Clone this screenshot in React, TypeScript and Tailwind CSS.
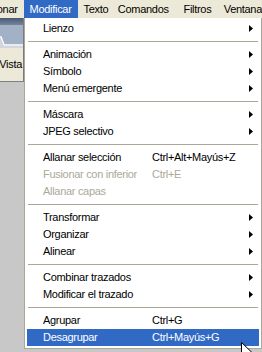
import React from "react";

type Item =
  | { sep: true }
  | { label: string; shortcut?: string; sub?: boolean; disabled?: boolean; active?: boolean };

const items: Item[] = [
  { label: "Lienzo", sub: true },
  { sep: true },
  { label: "Animación", sub: true },
  { label: "Símbolo", sub: true },
  { label: "Menú emergente", sub: true },
  { sep: true },
  { label: "Máscara", sub: true },
  { label: "JPEG selectivo", sub: true },
  { sep: true },
  { label: "Allanar selección", shortcut: "Ctrl+Alt+Mayús+Z" },
  { label: "Fusionar con inferior", shortcut: "Ctrl+E", disabled: true },
  { label: "Allanar capas", disabled: true },
  { sep: true },
  { label: "Transformar", sub: true },
  { label: "Organizar", sub: true },
  { label: "Alinear", sub: true },
  { sep: true },
  { label: "Combinar trazados", sub: true },
  { label: "Modificar el trazado", sub: true },
  { sep: true },
  { label: "Agrupar", shortcut: "Ctrl+G" },
  { label: "Desagrupar", shortcut: "Ctrl+Mayús+G", active: true },
];

function Arrow({ white }: { white?: boolean }) {
  return (
    <svg width="4" height="7" viewBox="0 0 4 7" className="block">
      <polygon points="0,0 4,3.5 0,7" fill={white ? "#fff" : "#000"} />
    </svg>
  );
}

export default function App() {
  return (
    <div className="relative w-[262px] h-[352px] overflow-hidden bg-[#c8c8c8] font-['Liberation_Sans',Arial,sans-serif] text-[11px] tracking-[-0.3px] text-black leading-none">
      {/* menubar */}
      <div className="flex h-[18px] bg-[#ECE9D8] whitespace-nowrap">
        <div className="w-[24px] h-full overflow-hidden flex items-center justify-end pr-[6px]">
          <span>Seleccionar</span>
        </div>
        <div className="w-[55px] h-full flex items-center pl-[6px] bg-[#316AC5] text-white">Modificar</div>
        <div className="w-[35px] h-full flex items-center pl-[6px]">Texto</div>
        <div className="w-[67px] h-full flex items-center pl-[6px]">Comandos</div>
        <div className="w-[41px] h-full flex items-center pl-[6px]">Filtros</div>
        <div className="flex-1 h-full flex items-center pl-[6px]">Ventana</div>
      </div>

      <div className="flex">
        {/* left panel */}
        <div className="w-[24px] shrink-0 flex flex-col">
          <div className="h-[7px] bg-gradient-to-b from-[#4a5a72] to-[#75869f] border-r border-[#7a7a7a]" />
          <div className="relative h-[23px] bg-[#a3b1c6] border-r border-[#7a7a7a]">
            <svg width="23" height="23" viewBox="0 0 23 23" className="absolute left-0 top-0">
              <polyline points="0,12 1,12 4,20 23,20" fill="none" stroke="#ffffff" strokeWidth="1.5" />
              <polygon points="0,13 0.5,13 3.5,21 23,21 23,23 0,23" fill="#d3d7dd" />
            </svg>
          </div>
          <div className="h-[33px] bg-[#ECE9D8] flex items-center justify-end overflow-hidden pr-[1px] border-r border-[#7a7a7a]">
            <span>Vista</span>
          </div>
          <div className="h-[1px] bg-[#808080]" />
        </div>

        {/* dropdown menu */}
        <div className="w-[238px] shrink-0 bg-white border-l border-r border-b border-[#ACA899] pt-[2px] pb-[2px] px-[2px]">
          {items.map((it, i) =>
            "sep" in it ? (
              <div key={i} className="h-[9px] flex items-center px-[1px]">
                <div className="h-px w-full bg-[#ACA899]" />
              </div>
            ) : (
              <div
                key={i}
                className={
                  "h-[17px] flex items-center pl-[16px] pr-[6px] whitespace-nowrap " +
                  (it.active ? "bg-[#316AC5] text-white " : "") +
                  (it.disabled ? "text-[#ACA899]" : "")
                }
              >
                <span className="w-[109px] shrink-0">{it.label}</span>
                {it.shortcut && <span>{it.shortcut}</span>}
                {it.sub && (
                  <span className="ml-auto">
                    <Arrow white={it.active} />
                  </span>
                )}
              </div>
            )
          )}
        </div>
      </div>

      {/* mouse cursor */}
      <svg
        width="13"
        height="20"
        viewBox="0 0 13 20"
        className="absolute left-[241px] top-[342px]"
      >
        <path
          d="M0.5,0.5 L0.5,16.5 L4.5,12.5 L7,18.5 L9.5,17.5 L7,11.5 L12,11.5 Z"
          fill="#fff"
          stroke="#000"
          strokeWidth="1"
        />
      </svg>
    </div>
  );
}
